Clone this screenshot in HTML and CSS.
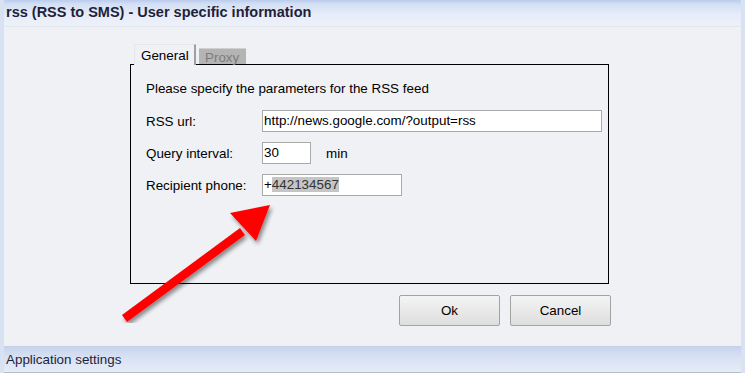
FILE: index.html
```html
<!DOCTYPE html>
<html>
<head>
<meta charset="utf-8">
<link rel="stylesheet" href="styles.css">
</head>
<body>
<div class="window">
  <div class="titlebar">rss (RSS to SMS) - User specific information</div>
  <div class="content">
    <div class="tabs">
      <div class="tab active">General</div>
      <div class="tab inactive">Proxy</div>
    </div>
    <div class="panel">
      <div class="intro">Please specify the parameters for the RSS feed</div>
      <div class="row">
        <span class="label">RSS url:</span>
        <span class="input wide">http://news.google.com/?output=rss</span>
      </div>
      <div class="row">
        <span class="label">Query interval:</span>
        <span class="input short">30</span>
        <span class="unit">min</span>
      </div>
      <div class="row">
        <span class="label">Recipient phone:</span>
        <span class="input mid">+<span class="sel">442134567</span></span>
      </div>
    </div>
    <div class="buttons">
      <button class="btn">Ok</button>
      <button class="btn">Cancel</button>
    </div>
    <svg class="arrow" width="160" height="130" viewBox="0 0 160 130">
      <defs>
        <filter id="sh" x="-20%" y="-20%" width="140%" height="140%">
          <feGaussianBlur in="SourceAlpha" stdDeviation="2"/>
          <feOffset dx="2" dy="3" result="b"/>
          <feComponentTransfer><feFuncA type="linear" slope="0.45"/></feComponentTransfer>
          <feMerge><feMergeNode/><feMergeNode in="SourceGraphic"/></feMerge>
        </filter>
      </defs>
      <g filter="url(#sh)" fill="#ff0000">
        <polygon points="2,122 7,129 125,42 120,35"/>
        <polygon points="110,20 150,12 136,48"/>
      </g>
    </svg>
  </div>
  <div class="footer">Application settings</div>
</div>
</body>
</html>
```
FILE: styles.css
```css
html, body {
  margin: 0;
  padding: 0;
  background: #f0f1f5;
}
body {
  font-family: "Liberation Sans", Arial, sans-serif;
  font-size: 13.4px;
  color: #000;
}
.window {
  width: 745px;
  height: 373px;
  box-sizing: border-box;
  display: flex;
  flex-direction: column;
  background: #f0f1f5;
  border-left: 4px solid #d9e2f2;
  border-right: 4px solid #d9e2f2;
  overflow: hidden;
}
.titlebar {
  height: 27px;
  box-sizing: border-box;
  margin: 0 -4px;
  padding: 4px 0 0 6px;
  font-weight: bold;
  font-size: 14.5px;
  color: #1f1f3a;
  background: linear-gradient(#b9cbee 0px, #d4dff4 4px, #e6ecf8 14px, #eef1f8 27px);
  border-radius: 6px 6px 0 0;
  border-bottom: 1px solid #e2e6ef;
}
.content {
  flex: 1;
  position: relative;
  padding: 17px 0 0 126px;
}
.tabs {
  display: flex;
  align-items: flex-end;
  height: 20px;
  margin-left: 4px;
  gap: 3px;
}
.tab {
  box-sizing: border-box;
  padding: 0 6px;
}
.tab.active {
  height: 21px;
  line-height: 22px;
  width: 62px;
  background: #f0f1f5;
  border-top: 1px solid #e4e6ea;
  border-left: 1px solid #e4e6ea;
  border-right: 2px solid #a0a0a0;
  position: relative;
  z-index: 1;
  margin-bottom: -1px;
  padding-left: 6px;
}
.tab.inactive {
  height: 16px;
  line-height: 17px;
  width: 47px;
  background: #b4b4b4;
  color: #7c7c7c;
  border-top: 1px solid #d0d0d0;
  padding-left: 6px;
}
.panel {
  width: 479px;
  height: 220px;
  box-sizing: border-box;
  border: 1px solid #000;
  padding: 16px 0 0 15px;
}
.intro {
  height: 16px;
  line-height: 16px;
  margin-bottom: 13px;
}
.row {
  display: flex;
  align-items: center;
  height: 22px;
  margin-bottom: 10px;
}
.label {
  width: 116px;
}
.input {
  box-sizing: border-box;
  height: 22px;
  line-height: 20px;
  border: 1px solid #aaaaaa;
  background: #fff;
  padding-left: 1px;
}
.input.wide { width: 340px; }
.input.short { width: 49px; }
.input.mid { width: 140px; }
.unit { margin-left: 15px; }
.sel {
  background: #c5c5c5;
  color: #333;
}
.buttons {
  display: flex;
  gap: 10px;
  margin: 11px 0 0 269px;
}
.btn {
  width: 101px;
  height: 31px;
  font-family: "Liberation Sans", Arial, sans-serif;
  font-size: 13.4px;
  color: #000;
  border: 1px solid #a3a3a3;
  border-radius: 2px;
  background: linear-gradient(#f4f4f4, #dedede);
  padding: 0;
}
.arrow {
  position: absolute;
  left: 116px;
  top: 166px;
}
.footer {
  height: 27px;
  box-sizing: border-box;
  margin: 0 -4px;
  padding: 5px 0 0 6px;
  color: #1f1f3a;
  background: linear-gradient(#c7d4ee 0px, #d8e1f3 10px, #e6ebf7 25px, #8a8f99 26px);
  border-top: 1px solid #c4d0ea;
}
```
